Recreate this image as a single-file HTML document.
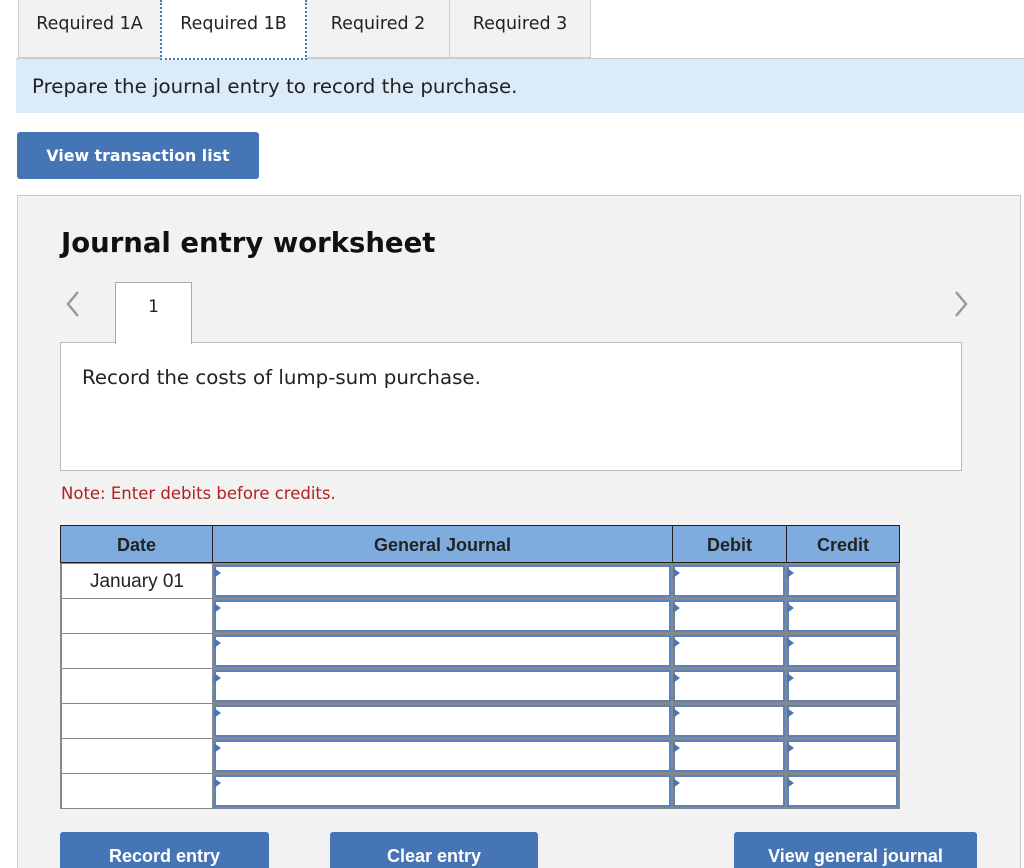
<!DOCTYPE html>
<html style="overflow:hidden;height:868px"><head><meta charset="utf-8"><style>
*{box-sizing:border-box;margin:0;padding:0}
body{width:1024px;height:868px;overflow:hidden;background:#fff;position:relative;font-family:"DejaVu Sans","Liberation Sans",sans-serif;color:#222}
.a{position:absolute}
.tab{position:absolute;top:0;height:58px;background:#f2f2f2;border:1px solid #ccc;border-top:none;font-size:17.5px;display:flex;align-items:center;justify-content:center;color:#222;padding-bottom:10px}
.btn{position:absolute;background:#4675b5;color:#fff;font-family:"Liberation Sans",sans-serif;font-weight:bold;font-size:18px;border-radius:3px;display:flex;align-items:center;justify-content:center}
.cell{position:absolute;background:#fff;border:1px solid #888}
.inp{position:absolute;background:#fff;border:2px solid #5b82bb}
.inp:before{content:"";position:absolute;left:-2px;top:1px;border-left:7px solid #4a76b8;border-top:5px solid transparent;border-bottom:5px solid transparent}
.hd{position:absolute;top:525px;height:38px;background:#7facdf;border:1px solid #222;font-family:"Liberation Sans",sans-serif;font-weight:bold;font-size:18px;display:flex;align-items:center;justify-content:center;color:#222;padding-top:2px}
</style></head><body>
<div class="tab" style="left:18px;width:143px">Required 1A</div>
<div class="tab" style="left:160px;width:147px;background:#fff;border:2px dotted #4a76b8;border-top:none;height:60px;z-index:2">Required 1B</div>
<div class="tab" style="left:306px;width:144px">Required 2</div>
<div class="tab" style="left:449px;width:142px">Required 3</div>
<div class="a" style="left:16px;top:58px;width:1008px;height:55px;background:#dcebf8;border-top:1px solid #ccc;font-size:19.8px;padding:16px 0 0 16px">Prepare the journal entry to record the purchase.</div>
<div class="btn" style="left:17px;top:132px;width:242px;height:47px;font-family:'DejaVu Sans',sans-serif;font-size:15.8px">View transaction list</div>
<div class="a" style="left:17px;top:195px;width:1004px;height:700px;background:#f2f2f2;border:1px solid #c8c8c8"></div>
<div class="a" style="left:61px;top:227px;font-size:27.5px;font-weight:bold;color:#111">Journal entry worksheet</div>
<svg class="a" style="left:60px;top:288px" width="24" height="32"><polyline points="18,4 8,16 18,28" fill="none" stroke="#999" stroke-width="2.5"/></svg>
<svg class="a" style="left:950px;top:288px" width="24" height="32"><polyline points="6,4 16,16 6,28" fill="none" stroke="#999" stroke-width="2.5"/></svg>
<div class="a" style="left:115px;top:282px;width:77px;height:62px;background:#fff;border:1px solid #aaa;border-bottom:none;z-index:2;font-size:17px;text-align:center;padding-top:14px">1</div>
<div class="a" style="left:60px;top:342px;width:902px;height:129px;background:#fff;border:1px solid #bbb;font-size:19.8px;padding:23px 0 0 21px">Record the costs of lump-sum purchase.</div>
<div class="a" style="left:61px;top:484px;font-size:16.5px;color:#b02020">Note: Enter debits before credits.</div>
<div class="hd" style="left:60px;width:153px">Date</div>
<div class="hd" style="left:212px;width:461px">General Journal</div>
<div class="hd" style="left:672px;width:115px">Debit</div>
<div class="hd" style="left:786px;width:114px">Credit</div>
<div id="rows"></div>
<script>
var h='';for(var i=0;i<7;i++){var t=563+i*35;
h+='<div class="cell" style="left:60px;top:'+t+'px;width:153px;height:36px;border-width:1px 1px 1px 2px;font-family:Liberation Sans,sans-serif;font-size:19px;text-align:center;padding-top:7px">'+(i==0?'January 01':'')+'</div>';
h+='<div class="a" style="left:212px;top:'+t+'px;width:688px;height:36px;background:#888"></div>';
h+='<div class="inp" style="left:214px;top:'+(t+2)+'px;width:457px;height:32px"></div>';
h+='<div class="inp" style="left:673px;top:'+(t+2)+'px;width:112px;height:32px"></div>';
h+='<div class="inp" style="left:787px;top:'+(t+2)+'px;width:111px;height:32px"></div>';}
document.getElementById('rows').innerHTML=h;
</script>
<div class="btn" style="left:60px;top:832px;width:209px;height:48px">Record entry</div>
<div class="btn" style="left:330px;top:832px;width:208px;height:48px">Clear entry</div>
<div class="btn" style="left:734px;top:832px;width:243px;height:48px">View general journal</div>
</body></html>
